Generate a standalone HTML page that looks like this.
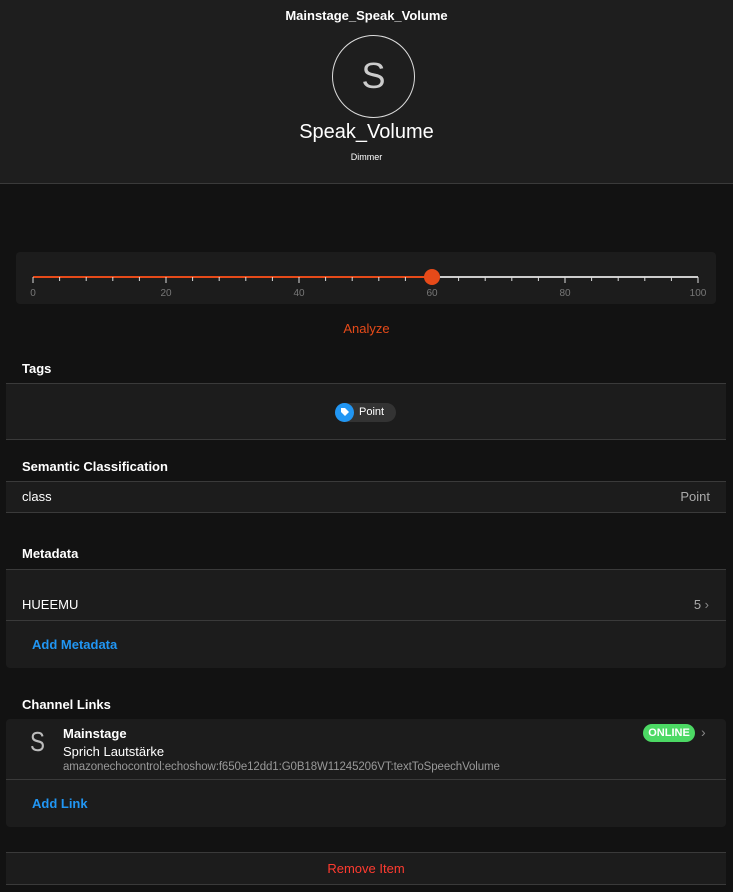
<!DOCTYPE html><html><head><style>
*{margin:0;padding:0;box-sizing:border-box}
body{width:733px;height:892px;background:#121212;font-family:"Liberation Sans",sans-serif;color:#fff;position:relative;overflow:hidden}
.a{position:absolute}
.h{font-weight:bold;font-size:13px;left:22px}
.card{position:absolute;left:6px;width:720px;background:#1c1c1c}
</style></head><body>
<div class="a" style="left:0;top:0;width:733px;height:184px;background:#1e1e1e;border-bottom:1px solid #3a3a3a"></div>
<div class="a" style="top:8px;width:733px;text-align:center;font-weight:bold;font-size:13px">Mainstage_Speak_Volume</div>
<div class="a" style="left:332px;top:35px;width:83px;height:83px;border:1px solid #ddd;border-radius:50%;text-align:center;line-height:80px;font-size:36px;color:#ccc">S</div>
<div class="a" style="top:121px;width:733px;text-align:center;font-size:20px">Speak_Volume</div>
<div class="a" style="top:152px;width:733px;text-align:center;font-size:9px">Dimmer</div>

<div class="a" style="left:16px;top:252px;width:700px;height:52px;background:#1c1c1c;border-radius:4px"></div>
<svg class="a" style="left:0;top:260px" width="733" height="40">
<line x1="33" y1="17" x2="432" y2="17" stroke="#e64a19" stroke-width="2"/>
<line x1="432" y1="17" x2="698" y2="17" stroke="#ccc" stroke-width="2"/>
<g stroke="#ddd" stroke-width="1">
<line x1="33" y1="17" x2="33" y2="23"/><line x1="59.6" y1="17" x2="59.6" y2="21"/><line x1="86.2" y1="17" x2="86.2" y2="21"/><line x1="112.8" y1="17" x2="112.8" y2="21"/><line x1="139.4" y1="17" x2="139.4" y2="21"/><line x1="166" y1="17" x2="166" y2="23"/><line x1="192.6" y1="17" x2="192.6" y2="21"/><line x1="219.2" y1="17" x2="219.2" y2="21"/><line x1="245.8" y1="17" x2="245.8" y2="21"/><line x1="272.4" y1="17" x2="272.4" y2="21"/><line x1="299" y1="17" x2="299" y2="23"/><line x1="325.6" y1="17" x2="325.6" y2="21"/><line x1="352.2" y1="17" x2="352.2" y2="21"/><line x1="378.8" y1="17" x2="378.8" y2="21"/><line x1="405.4" y1="17" x2="405.4" y2="21"/><line x1="458.6" y1="17" x2="458.6" y2="21"/><line x1="485.2" y1="17" x2="485.2" y2="21"/><line x1="511.8" y1="17" x2="511.8" y2="21"/><line x1="538.4" y1="17" x2="538.4" y2="21"/><line x1="565" y1="17" x2="565" y2="23"/><line x1="591.6" y1="17" x2="591.6" y2="21"/><line x1="618.2" y1="17" x2="618.2" y2="21"/><line x1="644.8" y1="17" x2="644.8" y2="21"/><line x1="671.4" y1="17" x2="671.4" y2="21"/><line x1="698" y1="17" x2="698" y2="23"/>
</g>
<circle cx="432" cy="17" r="8" fill="#e64a19"/>
<g fill="#777" font-size="10" text-anchor="middle" font-family="Liberation Sans">
<text x="33" y="36">0</text><text x="166" y="36">20</text><text x="299" y="36">40</text><text x="432" y="36">60</text><text x="565" y="36">80</text><text x="698" y="36">100</text></g>
</svg>
<div class="a" style="top:321px;width:733px;text-align:center;font-size:13px;color:#e64a19">Analyze</div>

<div class="a h" style="top:361px">Tags</div>
<div class="card" style="top:383px;height:57px;border-top:1px solid #3a3a3a;border-bottom:1px solid #3a3a3a"></div>
<div class="a" style="left:335px;top:403px;width:61px;height:19px;background:#333;border-radius:10px;font-size:11px;line-height:19px;padding-left:24px">Point</div>
<div class="a" style="left:335px;top:403px;width:19px;height:19px;background:#2196f3;border-radius:50%"><svg width="19" height="19"><path d="M6 5h4l4 4-4 4-4-4z" fill="#fff"/></svg></div>

<div class="a h" style="top:459px">Semantic Classification</div>
<div class="card" style="top:481px;height:32px;border-top:1px solid #3a3a3a;border-bottom:1px solid #3a3a3a"></div>
<div class="a" style="left:22px;top:489px;font-size:13px">class</div>
<div class="a" style="right:23px;top:489px;font-size:13px;color:#aaa">Point</div>

<div class="a h" style="top:546px">Metadata</div>
<div class="card" style="top:569px;height:99px;border-top:1px solid #3a3a3a;border-radius:0 0 4px 4px"></div>
<div class="a" style="left:6px;top:620px;width:720px;border-top:1px solid #3a3a3a"></div>
<div class="a" style="left:22px;top:597px;font-size:13px">HUEEMU</div>
<div class="a" style="right:24px;top:597px;font-size:13px;color:#aaa">5 <span style="color:#888">›</span></div>
<div class="a" style="left:32px;top:637px;font-size:13px;font-weight:bold;color:#2196f3">Add Metadata</div>

<div class="a h" style="top:697px">Channel Links</div>
<div class="card" style="top:719px;height:108px;border-radius:4px"></div>
<div class="a" style="left:6px;top:779px;width:720px;border-top:1px solid #3a3a3a"></div>
<div class="a" style="left:30px;top:726px;font-size:28px;color:#bbb;transform:scaleX(0.8);transform-origin:left">S</div>
<div class="a" style="left:63px;top:726px;font-size:13px;font-weight:bold">Mainstage</div>
<div class="a" style="left:63px;top:744px;font-size:13px">Sprich Lautstärke</div>
<div class="a" style="left:63px;top:761px;font-size:11.5px;color:#999;letter-spacing:-0.1px">amazonechocontrol:echoshow:f650e12dd1:G0B18W11245206VT:textToSpeechVolume</div>
<div class="a" style="left:643px;top:724px;width:52px;height:18px;background:#4cd964;border-radius:9px;font-size:11px;font-weight:bold;text-align:center;line-height:18px">ONLINE</div>
<div class="a" style="left:701px;top:724px;font-size:14px;color:#888">›</div>
<div class="a" style="left:32px;top:796px;font-size:13px;font-weight:bold;color:#2196f3">Add Link</div>

<div class="card" style="top:852px;height:33px;border-top:1px solid #3a3a3a;border-bottom:1px solid #3a3a3a;text-align:center;line-height:31px;font-size:13px;color:#ff3b30">Remove Item</div>
</body></html>
